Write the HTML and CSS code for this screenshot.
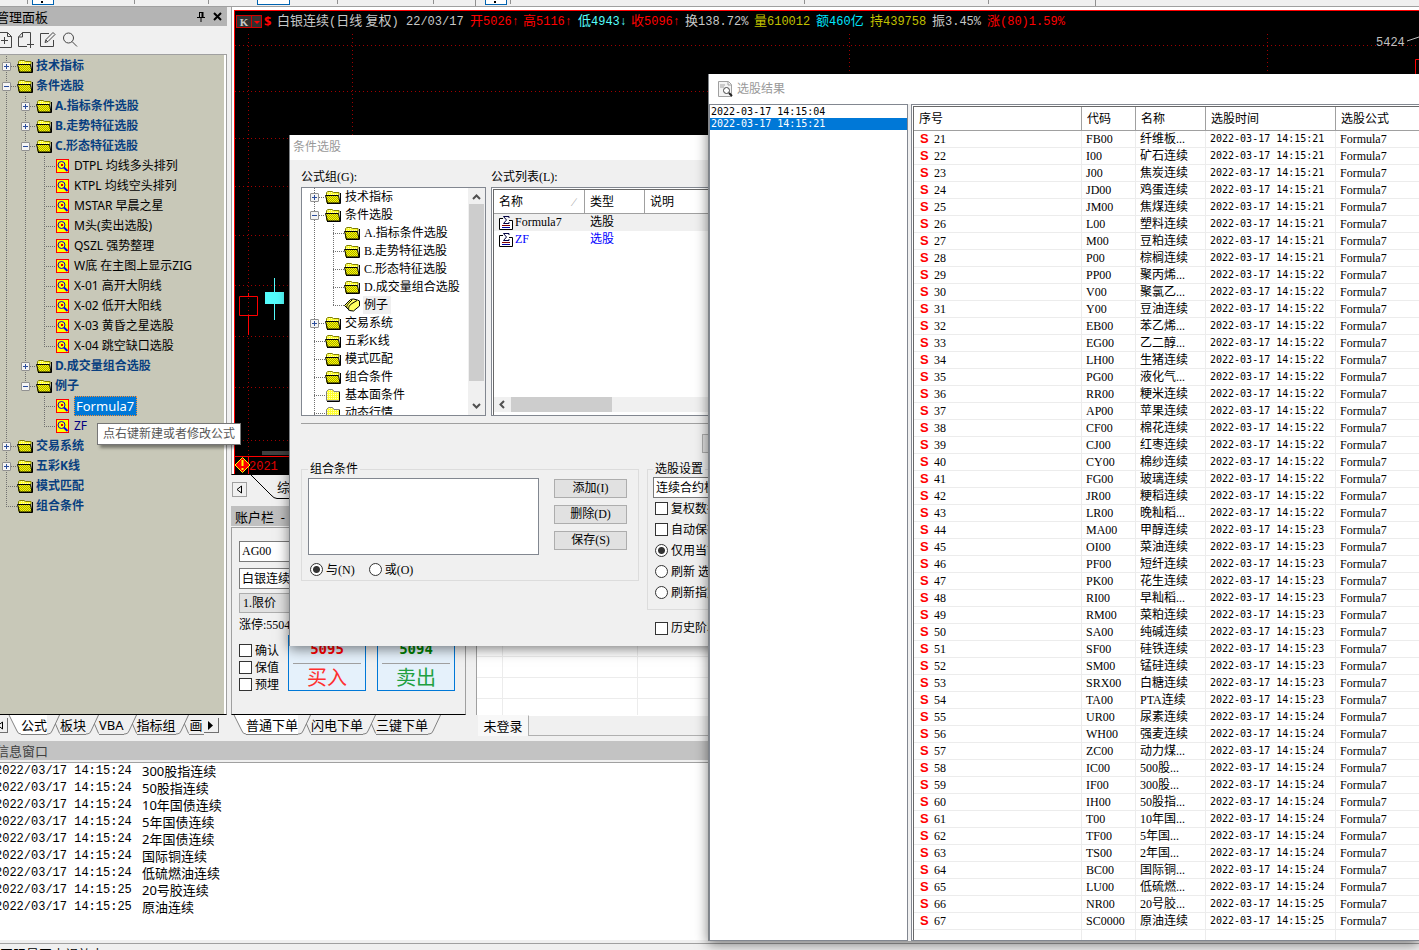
FILE: index.html
```html
<!DOCTYPE html>
<html lang="zh-CN">
<head>
    <meta charset="UTF-8">
    <meta name="viewport" content="width=device-width, initial-scale=1.0">
    <title>条件选股</title>
    <link rel="stylesheet" href="styles.css">
</head>
<body>

<svg class="defs" aria-hidden="true">
    <pattern id="dither" width="2" height="2" patternUnits="userSpaceOnUse">
        <rect width="2" height="2" fill="#ffff00"/>
        <rect width="1" height="1" fill="#a8a800"/>
        <rect x="1" y="1" width="1" height="1" fill="#a8a800"/>
    </pattern>
    <pattern id="light" width="2" height="2" patternUnits="userSpaceOnUse">
        <rect width="2" height="2" fill="#ffff30"/>
        <rect width="1" height="1" fill="#ffffc0"/>
    </pattern>
    <symbol id="folder" viewBox="0 0 16 14">
        <path d="M1.5 12.5V2.5L3 1.5h4l1.500 1h5.500v3" fill="url(#light)" stroke="#808000"/>
        <path d="M.5 5.500h13l1.500 7.500H2.500z" fill="url(#dither)" stroke="#000"/>
        <path d="M15.500 3v10.500H2" fill="none" stroke="#000"/>
    </symbol>
    <symbol id="folder-plain" viewBox="0 0 16 14">
        <path d="M1.500 12.500V3.500l2-2h4l1.500 2h5.500v9z" fill="url(#light)" stroke="#808080"/>
        <path d="M14.500 4v9.500H2" fill="none" stroke="#000"/>
    </symbol>
    <symbol id="folder-open" viewBox="0 0 16 14">
        <path d="M.5 7.500l6-6 3-.5 4 1 2 1v5l-6 5-4-.5z" fill="#ffff60" stroke="#000"/>
        <path d="M5 12.500c-1-3 0-5 3-7l5-3M3 10c-1-2 1-4 3-6l2-2" fill="none" stroke="#000"/>
    </symbol>
    <symbol id="formula" viewBox="0 0 16 14">
        <rect x="1.500" y=".5" width="12" height="13" fill="#ffff00" stroke="#ff0000"/>
        <circle cx="6.500" cy="6" r="3.500" fill="none" stroke="#0000d0"/>
        <rect x="6" y="5" width="2" height="2" fill="#e00000"/>
        <path d="M9 8.500l3.500 3.500" stroke="#0000ff" stroke-width="2"/>
    </symbol>
    <symbol id="sigma" viewBox="0 0 14 14">
        <path d="M4 2.500H.5v11h13v-9H10" fill="#fff" stroke="#000"/>
        <path d="M10 2V.5H4.500L7.500 4l-3 3.500H10V6" fill="none" stroke="#000040"/>
        <path d="M3 9.500h8" stroke="#800000"/>
        <path d="M3 11.500h8" stroke="#0000a0"/>
    </symbol>
    <symbol id="slant" viewBox="0 0 13 20">
        <path d="M12.500 0L5 16q-1 3-4 3H0M8.500 9l3 7q1 3 2 3" fill="none" stroke="#808080"/>
    </symbol>
    <symbol id="slant-first" viewBox="0 0 13 20">
        <path d="M0 0h13v19q-3 0-4-3z" fill="#fff"/>
        <path d="M1 0l8 16q1 3 4 3" fill="none" stroke="#808080"/>
    </symbol>
    <symbol id="slant-last" viewBox="0 0 13 20">
        <path d="M12.500 0L5 16q-1 3-4 3H0" fill="none" stroke="#808080"/>
    </symbol>
</svg>

<div class="app">
    <div class="toolbar">
        <i class="sep sep-a"></i><button class="tool" aria-label="十字光标"><b></b></button>
        <i class="sep sep-b"></i><i class="sep sep-c"></i>
        <button class="tool tool-wide" aria-label="周期"></button>
        <i class="sep sep-d"></i><i class="sep sep-e"></i><i class="sep sep-f"></i>
        <button class="tool" aria-label="画线"><b></b></button>
        <i class="sep sep-g"></i><i class="sep sep-h"></i><i class="sep sep-i"></i><i class="sep sep-j"></i>
    </div>

    <div class="workspace">
        <aside class="panel">
            <header class="panel-title">
                <span>管理面板</span>
                <button aria-label="固定"><svg width="9" height="11" viewBox="0 0 9 11"><path d="M2.500 1v5M2 1.500h4M0 6.500h8M4 7v4" fill="none" stroke="#000"/><path d="M5.500 1v5" stroke="#000" stroke-width="2"/></svg></button>
                <button aria-label="关闭"><svg width="9" height="9" viewBox="0 0 9 9"><path d="M1 1l7 7M8 1L1 8" stroke="#000" stroke-width="2"/></svg></button>
            </header>
            <div class="panel-tools">
                <button aria-label="新建组"><svg width="16" height="16" viewBox="0 0 16 16"><path d="M1.500.5h10l4 4v11h-14zM11.500.5v4h4M8.500 5v7M5 8.500h7" fill="none" stroke="#444"/></svg></button>
                <button aria-label="新建"><svg width="16" height="16" viewBox="0 0 16 16"><path d="M9 14.500H.5V5l4-4.500h8V9M4.500.5V5H.5M12.500 9v7M9 12.500h7" fill="none" stroke="#444"/></svg></button>
                <button aria-label="修改"><svg width="16" height="16" viewBox="0 0 16 16"><path d="M9 1.500H.5v13h13V8M5 10.500l1-3 7-7 2 2-7 7zM6 8l2 2" fill="none" stroke="#444"/></svg></button>
                <button aria-label="查找"><svg width="16" height="16" viewBox="0 0 16 16"><circle cx="6.500" cy="6" r="5" fill="none" stroke="#444"/><path d="M10 9.500l5 5" stroke="#444"/></svg></button>
            </div>
            <div class="panel-body">
                <ul class="tree" id="panelTree"></ul>
            </div>
            <nav class="tabs tabs-panel">
                <button class="tab-scroll" aria-label="向左"><svg width="7" height="9" viewBox="0 0 7 9"><path d="M5.500 1v7L1 4.500z" fill="none" stroke="#000"/></svg></button>
                <svg class="slant"><use href="#slant-first"/></svg>
                <button class="tab active">公式</button><svg class="slant"><use href="#slant"/></svg>
                <button class="tab">板块</button><svg class="slant"><use href="#slant"/></svg>
                <button class="tab">VBA</button><svg class="slant"><use href="#slant"/></svg>
                <button class="tab">指标组</button><svg class="slant"><use href="#slant"/></svg>
                <button class="tab tab-cut">画</button>
                <button class="tab-scroll" aria-label="向右"><svg width="7" height="9" viewBox="0 0 7 9"><path d="M1 0v9l5-4.500z" fill="#000"/></svg></button>
            </nav>
        </aside>

        <main class="main">
            <section class="chart">
                <div class="quote">
                    <span class="kbox"><b>K</b><i></i></span>
                    <b class="up">$</b>
                    <span>白银连续<em>(</em>日线 复权<em>) 22/03/17</em></span>
                    <span class="up">开<em>5026↑</em></span>
                    <span class="up">高<em>5116↑</em></span>
                    <span class="down">低<em>4943↓</em></span>
                    <span class="up">收<em>5096↑</em></span>
                    <span>换<em>138.72%</em></span>
                    <span class="vol">量<em>610012</em></span>
                    <span class="amount">额<em>460</em>亿</span>
                    <span class="vol">持<em>439758</em></span>
                    <span>振<em>3.45%</em></span>
                    <span class="up">涨<em>(80)1.59%</em></span>
                </div>
                <svg class="plot" width="100%" height="100%">
                    <g class="grid">
                        <path d="M0 15.500h1200M0 61.500h1200M0 108.500h1200M0 156.500h1200M0 205.500h1200M0 255.500h1200M0 306.500h1200M0 357.500h1200M0 410.500h1200"/>
                        <path d="M13.500 4v422M117.500 4v422M614.500 4v422M1032.500 4v422"/>
                    </g>
                    <path d="M4.500 266.500h18v19h-18zM13.500 263v3M13.500 286v19" class="candle-up"/>
                    <path d="M39.500 248v42" class="candle-down"/>
                    <rect x="30" y="262" width="19" height="12" fill="#54fcfc"/>
                    <path d="M1172 11l12-4" stroke="#c0c0c0"/>
                    <path d="M1180.500 60V29.500h8" class="candle-up"/>
                    <rect x="27" y="421" width="700" height="4" fill="#404040"/>
                    <path d="M0 426.500h1200M13.500 426v18" class="candle-up"/>
                    <path d="M7.500 427.500l7.500 7.500-7.500 7.500L0 435z" fill="#f00" stroke="#ff0"/>
                    <path d="M7.500 430v6M7.500 438v2" stroke="#ff0" stroke-width="2"/>
                    <text x="1141" y="16" fill="#c0c0c0">5424</text>
                    <text x="14" y="440" fill="#e00000">2021</text>
                </svg>
            </section>

            <div class="chart-tabs">
                <button class="tab-scroll" aria-label="向左"><svg width="7" height="9" viewBox="0 0 7 9"><path d="M5.500 1v7L1 4.500z" fill="none" stroke="#000"/></svg></button>
                <svg class="chart-slant" width="44" height="24" viewBox="0 0 44 24"><path d="M4 0l20 20q3 3.500 6 3.500h14" fill="none" stroke="#000"/></svg>
                <button class="tab">综合</button>
            </div>

            <div class="lower">
                <section class="account">
                    <header class="account-title">账户栏&nbsp; -</header>
                    <form class="order">
                        <input class="field" type="text" value="AG00" aria-label="代码">
                        <select class="field" aria-label="合约"><option>白银连续</option></select>
                        <button class="price-type" type="button">1.限价</button>
                        <p>涨停:5504</p>
                        <div class="order-row">
                            <div class="checks">
                                <label><input type="checkbox">确认</label>
                                <label><input type="checkbox">保值</label>
                                <label><input type="checkbox">预埋</label>
                            </div>
                            <button class="deal buy" type="button"><b>5095</b><span>买入</span></button>
                            <button class="deal sell" type="button"><b>5094</b><span>卖出</span></button>
                        </div>
                    </form>
                    <nav class="tabs tabs-account">
                        <svg class="slant"><use href="#slant-first"/></svg>
                        <button class="tab active">普通下单</button><svg class="slant"><use href="#slant"/></svg>
                        <button class="tab">闪电下单</button><svg class="slant"><use href="#slant"/></svg>
                        <button class="tab">三键下单</button><svg class="slant"><use href="#slant-last"/></svg>
                    </nav>
                </section>
                <section class="positions">
                    <div class="account-title"></div>
                    <div class="positions-grid"></div>
                    <div class="login"><button>未登录</button></div>
                </section>
            </div>
        </main>
    </div>

    <section class="info">
        <header class="info-title">信息窗口</header>
        <table class="log"><tbody id="log"></tbody></table>
    </section>
    <footer class="status">国际最国内视效点</footer>
</div>

<div class="tooltip">点右键新建或者修改公式</div>

<section class="window picker">
    <header class="window-title">条件选股</header>
    <div class="picker-body">
        <div class="picker-lists">
            <div class="picker-col">
                <h2>公式组(G):</h2>
                <div class="group-box">
                    <ul class="tree tree-small" id="groupTree"></ul>
                    <div class="scroll-y">
                        <svg width="9" height="6" viewBox="0 0 9 6"><path d="M1 5l3.500-3.500L8 5" fill="none" stroke="#505050" stroke-width="2"/></svg>
                        <i></i>
                        <svg width="9" height="6" viewBox="0 0 9 6"><path d="M1 1l3.500 3.500L8 1" fill="none" stroke="#505050" stroke-width="2"/></svg>
                    </div>
                </div>
            </div>
            <div class="picker-col picker-col-wide">
                <h2>公式列表(L):</h2>
                <div class="formula-box">
                    <table class="formulas">
                        <thead><tr><th class="f-name">名称<i>∕</i></th><th class="f-type">类型</th><th>说明</th></tr></thead>
                        <tbody>
                            <tr class="current"><td><svg width="14" height="14"><use href="#sigma"/></svg>Formula7</td><td>选股</td><td></td></tr>
                            <tr class="own"><td><svg width="14" height="14"><use href="#sigma"/></svg>ZF</td><td>选股</td><td></td></tr>
                        </tbody>
                    </table>
                    <div class="scroll-x">
                        <svg width="6" height="9" viewBox="0 0 6 9"><path d="M5 1L1.500 4.500 5 8" fill="none" stroke="#505050" stroke-width="2"/></svg>
                        <i></i>
                    </div>
                </div>
            </div>
        </div>

        <div class="picker-actions"><button class="btn">执行选股</button></div>

        <div class="picker-options">
            <fieldset class="combine">
                <legend>组合条件</legend>
                <textarea aria-label="组合条件"></textarea>
                <div class="combine-buttons">
                    <button class="btn">添加(I)</button>
                    <button class="btn">删除(D)</button>
                    <button class="btn">保存(S)</button>
                </div>
                <div class="combine-logic">
                    <label><input type="radio" name="logic" checked>与(N)</label>
                    <label><input type="radio" name="logic">或(O)</label>
                </div>
            </fieldset>
            <div>
                <fieldset class="settings">
                    <legend>选股设置</legend>
                    <select class="field" aria-label="选股范围"><option>连续合约板块</option></select>
                    <label><input type="checkbox">复权数据</label>
                    <label><input type="checkbox">自动保存</label>
                    <label><input type="radio" name="scope" checked>仅用当前</label>
                    <label><input type="radio" name="scope">刷新 选股</label>
                    <label><input type="radio" name="scope">刷新指定</label>
                </fieldset>
                <label class="history"><input type="checkbox">历史阶段</label>
            </div>
        </div>
    </div>
</section>

<section class="window results">
    <header class="window-title results-title">
        <svg width="16" height="16" viewBox="0 0 16 16"><path d="M1.500.5h10l3 3v12h-13z" fill="#f4f4f4" stroke="#a0a0a0"/><path d="M11 1v3h3M3 4h5M3 6h4" fill="none" stroke="#a0a0a0"/><circle cx="9.500" cy="9.500" r="3" fill="#fff" stroke="#444"/><path d="M12 12l3 3" stroke="#222" stroke-width="2"/></svg>
        选股结果
    </header>
    <div class="results-body">
        <select class="runs" size="10" aria-label="选股时间">
            <option>2022-03-17 14:15:04</option>
            <option selected>2022-03-17 14:15:21</option>
        </select>
        <div class="results-box">
            <table class="stocks">
                <colgroup><col class="c-no"><col class="c-code"><col class="c-name"><col class="c-time"><col></colgroup>
                <thead><tr><th>序号</th><th>代码</th><th>名称</th><th>选股时间</th><th>选股公式</th></tr></thead>
                <tbody id="stocks"></tbody>
            </table>
        </div>
    </div>
</section>

<script src="script.js"></script>
</body>
</html>
```
FILE: styles.css
```css
* {
    box-sizing: border-box;
}
body {
    margin: 0;
    height: 100vh;
    overflow: hidden;
    background-color: #f0f0f0;
    font-family: "Noto Sans", "Noto Sans CJK SC", sans-serif;
    font-size: 13px;
    line-height: 20px;
    color: #000;
}
button, input, select, textarea {
    margin: 0;
    padding: 0;
    border: none;
    border-radius: 0;
    background: none;
    font: inherit;
    color: inherit;
}
ul, p, h2 {
    margin: 0;
    padding: 0;
    font-size: inherit;
    font-weight: normal;
    list-style: none;
}
table {
    border-collapse: separate;
    border-spacing: 0;
}
th {
    font-weight: normal;
    text-align: left;
}
.defs {
    position: absolute;
    width: 0;
    height: 0;
}
.app {
    display: flex;
    flex-direction: column;
    height: 100vh;
}

/* toolbar */
.toolbar {
    display: flex;
    flex: none;
    height: 7px;
    border-bottom: 1px solid #a0a0a0;
}
.sep {
    width: 1px;
    height: 4px;
    background-color: #909090;
}
.sep-a { margin: 0 4px 0 27px; }
.sep-b { margin-left: 80px; }
.sep-c { margin: 0 48px 0 73px; }
.sep-d { margin-left: 47px; }
.sep-e { margin-left: 95px; }
.sep-f { height: 6px; margin: 0 9px 0 41px; }
.sep-g { margin-left: 3px; }
.sep-h { margin-left: 293px; }
.sep-i { margin-left: 183px; }
.sep-j { height: 6px; margin-left: 106px; }
.tool {
    width: 22px;
    height: 5px;
    border: 1px solid #0063b1;
    border-top: none;
    background-color: #fff;
}
.tool-wide {
    width: 33px;
}
.tool b {
    display: block;
    width: 2px;
    height: 2px;
    margin-left: 8px;
    background-color: #000;
}

/* left panel */
.workspace {
    display: flex;
    flex: 1;
    min-height: 0;
}
.panel {
    display: flex;
    flex-direction: column;
    flex: none;
    width: 227px;
}
.panel-title {
    display: flex;
    align-items: center;
    gap: 7px;
    height: 19px;
    padding-right: 5px;
    background-color: #b4b4b4;
}
.panel-title span {
    flex: 1;
    margin-left: -4px;
}
.panel-title button {
    display: flex;
}
.panel-tools {
    display: flex;
    align-items: center;
    gap: 6px;
    height: 28px;
    margin-left: -4px;
}
.panel-tools button {
    display: flex;
}
.panel-body {
    flex: 1;
    min-height: 0;
    padding-right: 2px;
    border-top: 1px solid #a0a0a0;
    border-right: 1px solid #a0a0a0;
    border-bottom: 1px solid #000;
    background-color: #fff;
}
.panel-body .tree {
    height: 100%;
    padding-top: 1px;
    background-color: #c8c8b8;
}

/* trees */
.tree {
    --row: 20px;
    font-size: 12px;
    line-height: 20px;
}
.tree ul {
    padding-left: 19px;
}
.tree li {
    background: repeating-linear-gradient(#707070 0 1px, transparent 1px 2px) 6px 0 / 1px 100% no-repeat;
}
.tree li:last-child {
    background-size: 1px calc(var(--row) / 2);
}
.node {
    display: flex;
    align-items: center;
    height: var(--row);
    padding-left: 6px;
    white-space: nowrap;
}
.node::before {
    content: "";
    width: 11px;
    height: 1px;
    background: repeating-linear-gradient(to right, #707070 0 1px, transparent 1px 2px);
}
.node.has-toggle {
    padding-left: 2px;
}
.node.has-toggle::before {
    order: 1;
    width: 6px;
}
.toggle {
    order: 0;
    width: 9px;
    height: 9px;
    border: 1px solid #919191;
    border-radius: 1px;
    background: linear-gradient(#2b4d9b, #2b4d9b) center / 5px 1px no-repeat, #f4f4f4;
}
.toggle.closed {
    background: linear-gradient(#2b4d9b, #2b4d9b) center / 5px 1px no-repeat, linear-gradient(#2b4d9b, #2b4d9b) center / 1px 5px no-repeat, #f4f4f4;
}
.node svg {
    order: 2;
    flex: none;
    width: 16px;
    height: 14px;
}
.node span {
    order: 3;
    margin-left: 3px;
}
.panel-body .node.group {
    color: #083f80;
    font-weight: bold;
}
.node.own {
    color: #000080;
}
.node.selected span {
    padding: 0 2px 0 1px;
    border: 1px dotted #ff9030;
    background-color: #0078d7;
    color: #fff;
    font-size: 13px;
    line-height: 18px;
}
.tree-small {
    --row: 18px;
    flex: 1;
    padding-left: 6px;
    line-height: 18px;
}
.tree-small .node span {
    margin-left: 4px;
}
.tree-small .node.current span {
    margin-left: 3px;
    padding: 0 3px 0 1px;
    background-color: #f0f0f0;
}

/* slanted tabs */
.tabs {
    display: flex;
    flex: none;
    height: 26px;
}
.tab {
    flex: none;
    height: 20px;
    border-bottom: 1px solid #808080;
    white-space: nowrap;
}
.tab.active {
    background-color: #fff;
}
.slant {
    flex: none;
    width: 13px;
    height: 20px;
}
.tab-cut {
    width: 15px;
    overflow: hidden;
}
.tab-scroll {
    display: flex;
    align-items: center;
    justify-content: center;
    flex: none;
    width: 15px;
    height: 15px;
    margin-top: 3px;
    border-right: 1px solid #707070;
    border-bottom: 1px solid #707070;
}
.tabs-panel .tab-scroll:first-child {
    margin-left: -7px;
}

/* chart */
.main {
    display: flex;
    flex-direction: column;
    flex: 1;
    min-width: 0;
    margin-left: 4px;
}
.chart {
    display: flex;
    flex-direction: column;
    flex: 1;
    min-height: 0;
    padding: 3px 0 0 2px;
    border-left: 1px solid #a0a0a0;
    border-bottom: 1px solid #000;
    background-color: #fff;
}
.quote {
    display: grid;
    flex: none;
    grid-template-columns: 29px 13px 193px 53px 55px 53px 54px 69px 62px 54px 62px 55px 1fr;
    align-items: center;
    height: 20px;
    border-top: 1px solid #f00;
    border-left: 1px solid #f00;
    background-color: #000;
    color: #c8c8c8;
    line-height: 19px;
    white-space: nowrap;
}
.quote em {
    font-family: "Liberation Mono", monospace;
    font-size: 12px;
    font-style: normal;
}
.up { color: #f00; }
.down { color: #54fcfc; }
.amount { color: #00e5ff; }
.vol { color: #c0c000; }
.kbox {
    display: flex;
    width: 26px;
    height: 13px;
    margin-left: 1px;
    border: 1px solid #d00000;
    background-color: #303030;
    font-family: "Liberation Serif", serif;
    font-size: 11px;
    line-height: 12px;
}
.kbox b {
    width: 15px;
    border-right: 1px solid #d00000;
    text-align: center;
}
.kbox i {
    height: 0;
    margin: 5px 0 0 2px;
    border: 3px solid transparent;
    border-top-color: #f00;
}
.plot {
    flex: 1;
    min-height: 0;
    border-left: 1px solid #f00;
    background-color: #000;
    font-family: "Liberation Mono", monospace;
    font-size: 12px;
}
.grid {
    fill: none;
    stroke: #a00000;
    stroke-dasharray: 1 3;
}
.candle-up {
    fill: none;
    stroke: #f00;
}
.candle-down {
    stroke: #54fcfc;
}
.chart-tabs {
    display: flex;
    flex: none;
    height: 31px;
    padding-left: 1px;
}
.chart-tabs .tab-scroll {
    margin-top: 7px;
    border: 1px solid #a0a0a0;
}
.chart-tabs .tab {
    height: 24px;
    margin-left: -14px;
    border-color: #000;
}

/* account bar */
.lower {
    display: flex;
    flex: none;
    gap: 10px;
    height: 235px;
}
.account {
    display: flex;
    flex-direction: column;
    flex: none;
    width: 235px;
}
.account-title {
    flex: none;
    height: 20px;
    padding: 1px 4px 0;
    background-color: #c0c0c0;
    white-space: nowrap;
}
.account .account-title {
    margin-right: -10px;
}
.order {
    flex: 1;
    min-height: 0;
    margin-top: 1px;
    padding: 13px 10px 0 7px;
    border: 1px solid #a0a0a0;
    border-bottom-color: #000;
    font-family: "Liberation Serif", "Noto Sans CJK SC", serif;
    font-size: 12px;
}
.field {
    display: block;
    width: 100%;
    height: 21px;
    padding-left: 2px;
    border: 1px solid #7a7a7a;
    background-color: #fff;
    appearance: none;
}
.order .field + .field {
    margin-top: 6px;
}
.price-type {
    display: block;
    width: 100%;
    height: 20px;
    margin-top: 4px;
    padding-left: 3px;
    border: 1px solid #adadad;
    background-color: #e1e1e1;
    line-height: 18px;
    text-align: left;
}
.order p {
    margin-top: 2px;
}
.order-row {
    display: flex;
    gap: 11px;
}
.checks {
    flex: none;
    width: 38px;
    padding-top: 7px;
}
.checks label {
    display: flex;
    align-items: center;
    gap: 3px;
    height: 17px;
    white-space: nowrap;
}
input[type="checkbox"], input[type="radio"] {
    flex: none;
    width: 13px;
    height: 13px;
    border: 1px solid #333;
    background-color: #fff;
    appearance: none;
}
input[type="radio"] {
    border-radius: 50%;
}
input[type="radio"]:checked {
    background: radial-gradient(circle, #333 3px, #fff 4px);
}
.deal {
    flex: 1;
    height: 56px;
    border: 1px solid #0078d7;
    background-color: #e5f1fb;
    font-size: 20px;
    line-height: 26px;
    color: #ff3030;
}
.deal b {
    display: block;
    height: 28px;
    margin: 0 4px;
    border-bottom: 1px solid #a0a0a0;
    font-family: "DejaVu Sans Mono", monospace;
    font-size: 14px;
    color: #f00;
}
.deal span {
    display: block;
    font-family: "Noto Sans CJK SC", sans-serif;
}
.sell { color: #20a040; }
.sell b { color: #008000; }
.tabs-account {
    padding-left: 2px;
}
.positions {
    display: flex;
    flex-direction: column;
    flex: 1;
    min-width: 0;
}
.positions-grid {
    flex: 1;
    border-left: 1px solid #a0a0a0;
    background:
        linear-gradient(#ececec, #ececec) 25px 0 / 1px 100% no-repeat,
        linear-gradient(#ececec, #ececec) 160px 0 / 1px 100% no-repeat,
        repeating-linear-gradient(#fff 0 20px, #ececec 20px 21px) 0 5px;
}
.login {
    display: flex;
    flex: none;
    height: 26px;
    padding: 0 0 5px 2px;
}
.login::after {
    content: "";
    flex: 1;
    border: 1px solid #b0b0b0;
    border-top-color: #fff;
}
.login button {
    width: 50px;
    background-color: #f8f8f8;
}

/* information window */
.info {
    flex: none;
    height: 202px;
    border-bottom: 3px solid #f0f0f0;
    background-color: #fff;
}
.info-title {
    height: 21px;
    border-bottom: 2px solid #f0f0f0;
    background-color: #c3c3c3;
    color: #404040;
    text-indent: -4px;
}
.log {
    width: 100%;
    margin-left: -5px;
    border-top: 1px solid #a0a0a0;
    line-height: 17px;
}
.log td {
    height: 17px;
    padding: 0;
    line-height: 17px;
}
.log td:first-child {
    width: 147px;
    font-family: "Liberation Mono", monospace;
    font-size: 12px;
}
.status {
    flex: none;
    height: 7px;
    overflow: hidden;
    border-top: 1px solid #a0a0a0;
    line-height: 20px;
}
.tooltip {
    position: absolute;
    top: 423px;
    left: 97px;
    padding: 0 5px;
    border: 1px solid #767676;
    background-color: #fff;
    box-shadow: 3px 3px 3px rgba(0, 0, 0, 0.4);
    font-size: 12px;
    color: #575757;
}

/* windows */
.window {
    position: absolute;
    display: flex;
    flex-direction: column;
    border-left: 1px solid #808488;
    background-color: #f0f0f0;
    box-shadow: 0 3px 12px rgba(0, 0, 0, 0.5);
    font-family: "Liberation Serif", "Noto Sans CJK SC", serif;
    font-size: 12px;
}
.window-title {
    flex: none;
    background-color: #fff;
    font-size: 12px;
    color: #999;
}
.picker {
    top: 135px;
    left: 289px;
    width: 580px;
    height: 511px;
}
.picker .window-title {
    height: 25px;
    padding: 2px 3px;
}
.picker-body {
    padding: 7px 11px;
}
.picker-lists {
    display: flex;
    gap: 5px;
    padding-bottom: 7px;
    border-bottom: 1px solid #a0a0a0;
}
.picker-col {
    flex: none;
    width: 185px;
}
.picker-col-wide {
    flex: 1;
}
.group-box, .formula-box {
    display: flex;
    height: 229px;
    overflow: hidden;
    border: 1px solid #828790;
    background-color: #fff;
}
.formula-box {
    flex-direction: column;
    padding: 1px 0 3px 1px;
    box-shadow: inset 2px 2px 0 -1px #fff, inset 3px 3px 0 -1px #696969;
}
.scroll-y {
    display: flex;
    flex-direction: column;
    align-items: center;
    justify-content: space-between;
    flex: none;
    width: 17px;
    padding: 6px 0;
    background-color: #f0f0f0;
}
.scroll-y i {
    width: 15px;
    height: 177px;
    margin-bottom: 18px;
    background-color: #cdcdcd;
}
.formulas {
    width: 100%;
    margin: 1px 0 0 1px;
    table-layout: fixed;
}
.formulas th {
    height: 24px;
    padding-left: 5px;
    border-right: 1px solid #a0a0a0;
    border-bottom: 1px solid #a0a0a0;
}
.formulas .f-name { width: 91px; }
.formulas .f-type { width: 60px; }
.formulas i {
    float: right;
    margin-right: 8px;
    color: #a0a0a0;
}
.formulas td {
    height: 17px;
    padding: 0 0 0 5px;
    line-height: 17px;
}
.formulas svg {
    margin-right: 2px;
    vertical-align: middle;
}
.formulas .current {
    background-color: #f0f0f0;
}
.formulas .own {
    color: #0000ff;
}
.scroll-x {
    display: flex;
    align-items: center;
    gap: 6px;
    height: 15px;
    margin: auto 0 0 1px;
    padding-left: 5px;
    background-color: #f0f0f0;
}
.scroll-x i {
    width: 101px;
    height: 15px;
    background-color: #cdcdcd;
}
.btn {
    width: 73px;
    height: 19px;
    border: 1px solid #adadad;
    background-color: #e1e1e1;
    line-height: 17px;
}
.picker-actions {
    height: 37px;
    padding: 10px 0 0 401px;
}
.picker-actions .btn {
    display: block;
}
.picker-options {
    display: flex;
    align-items: flex-start;
    gap: 8px;
}
fieldset {
    margin: 0;
    padding: 0 5px;
    border: 1px solid #dcdcdc;
}
legend {
    height: 16px;
    padding: 0 2px;
    line-height: 16px;
}
.combine {
    display: grid;
    grid-template-columns: 231px 73px;
    column-gap: 15px;
    width: 338px;
    height: 120px;
    padding: 0 6px;
}
.combine textarea {
    height: 77px;
    margin-top: 1px;
    border: 1px solid #828790;
    background-color: #fff;
    resize: none;
}
.combine-buttons {
    display: flex;
    flex-direction: column;
    gap: 7px;
    padding-top: 2px;
}
.combine-logic {
    display: flex;
    gap: 14px;
    padding: 4px 2px 0;
}
.picker label {
    display: flex;
    align-items: center;
    gap: 3px;
    white-space: nowrap;
}
.settings {
    width: 190px;
    height: 149px;
}
.settings .field {
    margin: 0;
}
.settings label {
    height: 21px;
    padding-left: 2px;
}
.picker .history {
    margin: 8px 8px 0;
}

/* results */
.results {
    top: 74px;
    right: 0;
    bottom: 9px;
    left: 708px;
}
.results-title {
    display: flex;
    align-items: center;
    gap: 4px;
    height: 30px;
    padding: 0 8px;
}
.results-body {
    display: flex;
    flex: 1;
    gap: 3px;
    min-height: 0;
}
.runs {
    flex: none;
    width: 199px;
    overflow: hidden;
    padding: 1px 0;
    border: 1px solid #828790;
    background-color: #fff;
    font-family: "DejaVu Sans Mono", monospace;
    font-size: 10px;
}
.runs option {
    height: 12px;
    min-height: 12px;
    padding: 0 1px;
    line-height: 12px;
}
.runs option:checked {
    background: #0078d7 linear-gradient(#0078d7, #0078d7);
    color: #fff;
}
.results-box {
    flex: 1;
    min-width: 0;
    padding: 1px 0 0 1px;
    overflow: hidden;
    border: 1px solid #828790;
    border-right: none;
    background-color: #fff;
}
.stocks {
    width: 100%;
    border-top: 1px solid #696969;
    border-left: 1px solid #696969;
    table-layout: fixed;
    white-space: nowrap;
}
.c-no { width: 168px; }
.c-code { width: 54px; }
.c-name { width: 70px; }
.c-time { width: 130px; }
.stocks th {
    height: 24px;
    padding: 0 0 0 5px;
    border-right: 1px solid #a0a0a0;
    border-bottom: 1px solid #a0a0a0;
}
.stocks td {
    height: 17px;
    padding: 0 0 0 4px;
    border-right: 1px solid #ececec;
    border-bottom: 1px solid #ececec;
    line-height: 16px;
}
.stocks th:last-child, .stocks td:last-child {
    border-right: none;
}
.stocks .time {
    font-family: "DejaVu Sans Mono", monospace;
    font-size: 10px;
}
.stocks td b {
    display: inline-block;
    width: 16px;
    padding-left: 2px;
    font-family: "Liberation Sans", sans-serif;
    font-size: 13px;
    color: #f00;
}
```
FILE: script.js
```javascript
const panelTree = [
    { text: '技术指标', group: true, closed: true },
    { text: '条件选股', group: true, children: [
        { text: 'A.指标条件选股', group: true, closed: true },
        { text: 'B.走势特征选股', group: true, closed: true },
        { text: 'C.形态特征选股', group: true, children: [
            'DTPL 均线多头排列', 'KTPL 均线空头排列', 'MSTAR 早晨之星', 'M头(卖出选股)', 'QSZL 强势整理',
            'W底 在主图上显示ZIG', 'X-01 高开大阴线', 'X-02 低开大阳线', 'X-03 黄昏之星选股', 'X-04 跳空缺口选股'
        ].map(text => ({ text: text, icon: 'formula' })) },
        { text: 'D.成交量组合选股', group: true, closed: true },
        { text: '例子', group: true, children: [
            { text: 'Formula7', icon: 'formula', state: 'selected' },
            { text: 'ZF', icon: 'formula', state: 'own' }
        ] }
    ] },
    { text: '交易系统', group: true, closed: true },
    { text: '五彩K线', group: true, closed: true },
    { text: '模式匹配', group: true },
    { text: '组合条件', group: true }
];

const groupTree = [
    { text: '技术指标', closed: true },
    { text: '条件选股', children: [
        { text: 'A.指标条件选股' },
        { text: 'B.走势特征选股' },
        { text: 'C.形态特征选股' },
        { text: 'D.成交量组合选股' },
        { text: '例子', icon: 'folder-open', state: 'current' }
    ] },
    { text: '交易系统', closed: true },
    { text: '五彩K线' },
    { text: '模式匹配' },
    { text: '组合条件' },
    { text: '基本面条件', icon: 'folder-plain' },
    { text: '动态行情', icon: 'folder-plain' },
    { text: '自定义', icon: 'folder-plain' }
];

function treeHtml(nodes) {
    return nodes.map(node => {
        const hasToggle = node.closed || node.children;
        const classes = ['node', node.group ? 'group' : '', hasToggle ? 'has-toggle' : '', node.state || ''].join(' ');
        const toggle = hasToggle ? `<button class="toggle ${node.closed ? 'closed' : ''}" aria-label="${node.text}"></button>` : '';
        const children = node.children ? `<ul>${treeHtml(node.children)}</ul>` : '';
        return `<li><div class="${classes}">${toggle}<svg><use href="#${node.icon || 'folder'}"/></svg><span>${node.text}</span></div>${children}</li>`;
    }).join('');
}

document.getElementById('panelTree').innerHTML = treeHtml(panelTree);
document.getElementById('groupTree').innerHTML = treeHtml(groupTree);

const log = [
    ['24', '300股指连续'], ['24', '50股指连续'], ['24', '10年国债连续'],
    ['24', '5年国债连续'], ['24', '2年国债连续'], ['24', '国际铜连续'],
    ['24', '低硫燃油连续'], ['25', '20号胶连续'], ['25', '原油连续']
];

document.getElementById('log').innerHTML = log.map(row =>
    `<tr><td>2022/03/17 14:15:${row[0]}</td><td>${row[1]}</td></tr>`
).join('');

// code, name; the list starts at number 21
const stocks = [
    'FB00 纤维板...', 'I00 矿石连续', 'J00 焦炭连续', 'JD00 鸡蛋连续', 'JM00 焦煤连续', 'L00 塑料连续',
    'M00 豆粕连续', 'P00 棕榈连续', 'PP00 聚丙烯...', 'V00 聚氯乙...', 'Y00 豆油连续', 'EB00 苯乙烯...',
    'EG00 乙二醇...', 'LH00 生猪连续', 'PG00 液化气...', 'RR00 粳米连续', 'AP00 苹果连续', 'CF00 棉花连续',
    'CJ00 红枣连续', 'CY00 棉纱连续', 'FG00 玻璃连续', 'JR00 粳稻连续', 'LR00 晚籼稻...', 'MA00 甲醇连续',
    'OI00 菜油连续', 'PF00 短纤连续', 'PK00 花生连续', 'RI00 早籼稻...', 'RM00 菜粕连续', 'SA00 纯碱连续',
    'SF00 硅铁连续', 'SM00 锰硅连续', 'SRX00 白糖连续', 'TA00 PTA连续', 'UR00 尿素连续', 'WH00 强麦连续',
    'ZC00 动力煤...', 'IC00 500股...', 'IF00 300股...', 'IH00 50股指...', 'T00 10年国...', 'TF00 5年国...',
    'TS00 2年国...', 'BC00 国际铜...', 'LU00 低硫燃...', 'NR00 20号胶...', 'SC0000 原油连续'
];

function secondOf(no) {
    if (no <= 28) return 21;
    if (no <= 43) return 22;
    if (no <= 54) return 23;
    if (no <= 65) return 24;
    return 25;
}

document.getElementById('stocks').innerHTML = stocks.map((stock, i) => {
    const no = i + 21;
    const [code, name] = stock.split(' ');
    return `<tr><td><b>S</b>${no}</td><td>${code}</td><td>${name}</td><td class="time">2022-03-17 14:15:${secondOf(no)}</td><td>Formula7</td></tr>`;
}).join('') + '<tr><td></td><td></td><td></td><td></td><td></td></tr>';
```
